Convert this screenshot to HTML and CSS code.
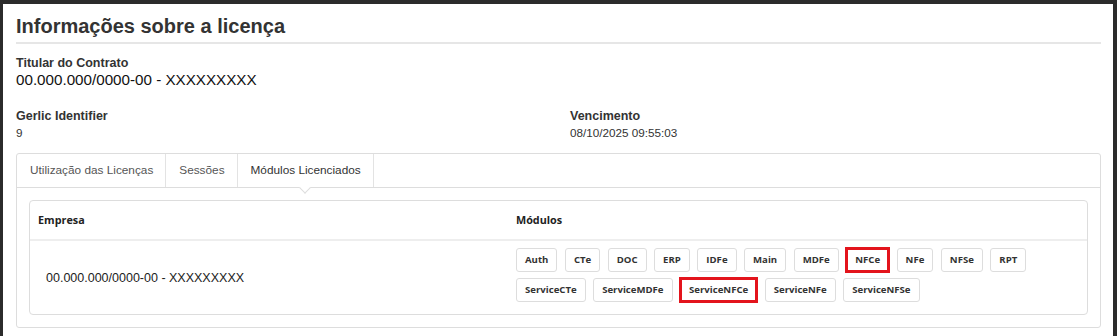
FILE: index.html
```html
<!DOCTYPE html>
<html>
<head>
	<meta charset="UTF-8">
	<title>Informações sobre a licença</title>
	<link rel="stylesheet" href="styles.css">
</head>
<body>
	<div class="panel">
		<h1 class="page_title">Informações sobre a licença</h1>

		<div class="field">
			<div class="field_label">Titular do Contrato</div>
			<div class="field_value big">00.000.000/0000-00 - XXXXXXXXX</div>
		</div>

		<div class="field_row">
			<div class="field">
				<div class="field_label">Gerlic Identifier</div>
				<div class="field_value">9</div>
			</div>
			<div class="field">
				<div class="field_label">Vencimento</div>
				<div class="field_value">08/10/2025 09:55:03</div>
			</div>
		</div>

		<div class="tabs">
			<ul class="tab_list">
				<li class="tab">Utilização das Licenças</li>
				<li class="tab">Sessões</li>
				<li class="tab active">Módulos Licenciados</li>
			</ul>
			<div class="tab_body">
				<div class="card">
					<div class="card_head">
						<div class="col_company">Empresa</div>
						<div class="col_modules">Módulos</div>
					</div>
					<div class="card_row">
						<div class="company_name">00.000.000/0000-00 - XXXXXXXXX</div>
						<div class="module_list">
							<span class="module">Auth</span>
							<span class="module">CTe</span>
							<span class="module">DOC</span>
							<span class="module">ERP</span>
							<span class="module">IDFe</span>
							<span class="module">Main</span>
							<span class="module">MDFe</span>
							<span class="module marked">NFCe</span>
							<span class="module">NFe</span>
							<span class="module">NFSe</span>
							<span class="module">RPT</span>
							<span class="module">ServiceCTe</span>
							<span class="module">ServiceMDFe</span>
							<span class="module marked">ServiceNFCe</span>
							<span class="module">ServiceNFe</span>
							<span class="module">ServiceNFSe</span>
						</div>
					</div>
				</div>
			</div>
		</div>
	</div>
</body>
</html>
```

FILE: styles.css
```css
html, body {
	margin:0;
	height:100%;
	overflow:hidden;
}
body {
	background-color:#2b2b2b;
	font-family:"Liberation Sans", Arial, sans-serif;
	color:#333;
}
.panel {
	background-color:#fff;
	margin:4px 4px 0 3px;
	padding:0 12px 0 13px;
	height:100%;
}
.page_title {
	margin:0;
	padding:10px 0 4px 0;
	font-size:20px;
	line-height:24px;
	font-weight:bold;
	color:#333;
	border-bottom:2px solid #e6e6e6;
}
.field {
	display:flex;
	flex-direction:column;
}
.panel > .field {
	margin-top:12px;
}
.field_label {
	font-size:12.5px;
	line-height:15px;
	font-weight:bold;
	color:#333;
}
.field_value {
	font-size:11.7px;
	line-height:14px;
	margin-top:2px;
	color:#333;
}
.field_value.big {
	font-size:15.2px;
	line-height:18px;
	margin-top:0;
	color:#111;
}
.field_row {
	display:grid;
	grid-template-columns:554px 1fr;
	margin-top:20px;
}
.tabs {
	margin-top:13px;
	border:1px solid #ddd;
	border-radius:3px;
}
.tab_list {
	display:flex;
	margin:0;
	padding:0;
	list-style:none;
	border-bottom:1px solid #ddd;
}
.tab {
	position:relative;
	padding:9px 12px 10px 13px;
	font-size:11.8px;
	line-height:14px;
	color:#555;
	border-right:1px solid #e3e3e3;
}
.tab.active {
	color:#333;
}
.tab.active::after {
	content:"";
	position:absolute;
	left:50%;
	bottom:-5px;
	width:7px;
	height:7px;
	margin-left:-4px;
	background-color:#fff;
	border-right:1px solid #ddd;
	border-bottom:1px solid #ddd;
	transform:rotate(45deg);
}
.tab_body {
	padding:12px;
}
.card {
	border:1px solid #ddd;
	border-radius:4px;
	font-family:"Open Sans", "Noto Sans", sans-serif;
}
.card_head {
	display:grid;
	grid-template-columns:478px 1fr;
	border-bottom:2px solid #eee;
	font-size:10.8px;
	line-height:15px;
	font-weight:bold;
	color:#222;
}
.col_company, .col_modules {
	padding:11px 8px 12px 8px;
}
.card_row {
	display:grid;
	grid-template-columns:478px 1fr;
	align-items:center;
}
.company_name {
	padding-left:16px;
	font-family:"Liberation Sans", Arial, sans-serif;
	font-size:12.5px;
	color:#222;
}
.module_list {
	display:flex;
	flex-wrap:wrap;
	gap:6px 7.5px;
	padding:7px 8px 12px 8px;
}
.module {
	padding:4px 8px;
	font-size:9.6px;
	line-height:14px;
	font-weight:bold;
	color:#333;
	background-color:#fff;
	border:1px solid #ddd;
	border-radius:3px;
}
.module.marked {
	border-color:#e3141c;
	border-radius:0;
	box-shadow:0 0 0 1px #e3141c, inset 0 0 0 1px #e3141c;
}
```
